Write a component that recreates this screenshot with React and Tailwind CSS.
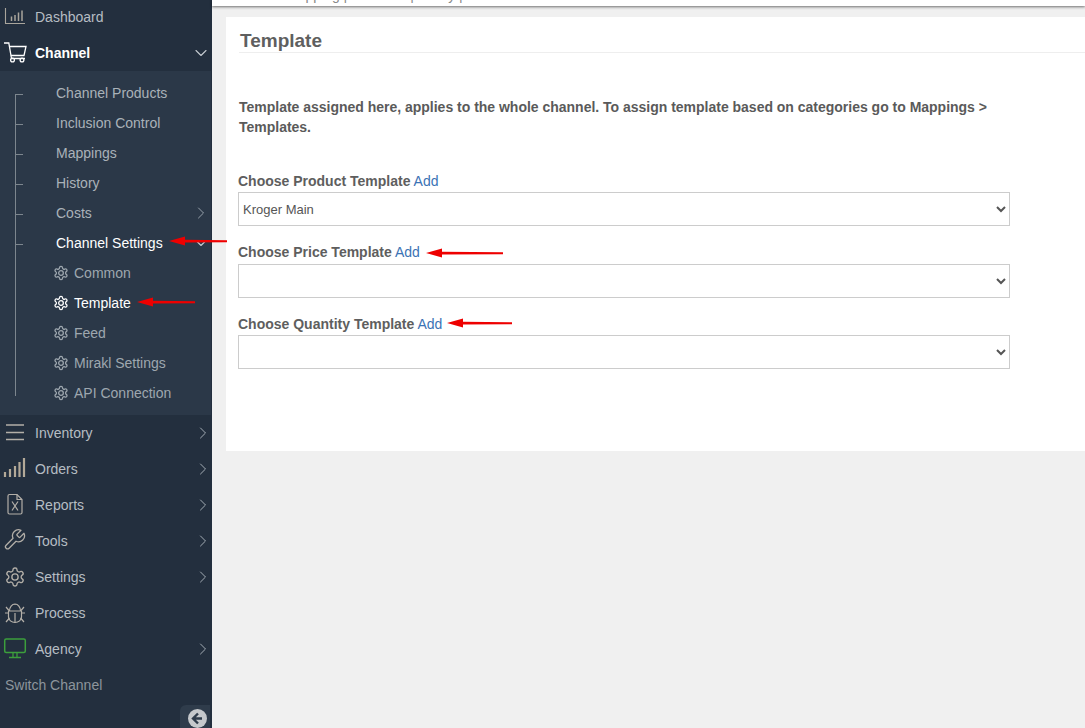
import React from "react";
import { ChevronRight, ChevronDown } from "lucide-react";

const GEAR = "M12.22 2h-.44a2 2 0 0 0-2 2v.18a2 2 0 0 1-1 1.73l-.43.25a2 2 0 0 1-2 0l-.15-.08a2 2 0 0 0-2.73.73l-.22.38a2 2 0 0 0 .73 2.73l.15.1a2 2 0 0 1 1 1.72v.51a2 2 0 0 1-1 1.74l-.15.09a2 2 0 0 0-.73 2.73l.22.38a2 2 0 0 0 2.73.73l.15-.08a2 2 0 0 1 2 0l.43.25a2 2 0 0 1 1 1.73V20a2 2 0 0 0 2 2h.44a2 2 0 0 0 2-2v-.18a2 2 0 0 1 1-1.73l.43-.25a2 2 0 0 1 2 0l.15.08a2 2 0 0 0 2.73-.73l.22-.39a2 2 0 0 0-.73-2.73l-.15-.08a2 2 0 0 1-1-1.74v-.5a2 2 0 0 1 1-1.74l.15-.09a2 2 0 0 0 .73-2.73l-.22-.38a2 2 0 0 0-2.73-.73l-.15.08a2 2 0 0 1-2 0l-.43-.25a2 2 0 0 1-1-1.73V4a2 2 0 0 0-2-2z";

const Gear = () => (
  <svg width="16" height="16" viewBox="0 0 24 24" fill="none" stroke="currentColor" strokeWidth="1.9" className="shrink-0">
    <path d={GEAR} />
    <circle cx="12" cy="12" r="3.5" />
  </svg>
);

const Ico = ({ children, stroke = "#b3afa8", sw = 1.3 }) => (
  <svg width="30" height="24" viewBox="0 0 30 24" fill="none" stroke={stroke} strokeWidth={sw}>
    {children}
  </svg>
);

const Dash = () => (
  <Ico stroke="#a9a59c" sw={1.1}>
    <path d="M5.500 3v15.500H25" />
    <path d="M11.500 16v-4.500M15 16v-6M18.500 16V7.500M22 16V5.500" strokeWidth="1.500" />
  </Ico>
);
const Cart = () => (
  <Ico stroke="#ffffff" sw={1.3}>
    <path d="M4 2h4.800L11.500 17.500H25" />
    <path d="M9 5.500H26L24 14.500H10.800" />
    <circle cx="12.500" cy="19" r="1.900" />
    <circle cx="22" cy="19" r="1.900" />
  </Ico>
);
const Lines = () => (
  <Ico sw={1.600}>
    <path d="M6 4h18M6 11.500h18M6 18.500h18" />
  </Ico>
);
const Bars = () => (
  <Ico stroke="#b3a998" sw={2.2}>
    <path d="M5 20v-5M10 20v-8M15 20v-11M19.500 20V5M24 20V1" />
  </Ico>
);
const Excel = () => (
  <Ico sw={1.200}>
    <path d="M9.500 1.500h7.500l5 5v13a1.500 1.500 0 0 1-1.500 1.500h-11a1.500 1.500 0 0 1-1.500-1.500V3a1.500 1.500 0 0 1 1.500-1.500z" />
    <path d="M17 1.500v5h5" />
    <path d="M12 8.500l6 9M18 8.500l-6 9" />
  </Ico>
);
const Wrench = () => (
  <Ico sw={1.300}>
    <path
      transform="translate(2.500 -1.200)"
      strokeLinejoin="round"
      d="M14.700 6.300a1 1 0 0 0 0 1.400l1.600 1.600a1 1 0 0 0 1.400 0l3.770-3.770a6 6 0 0 1-7.940 7.940l-6.910 6.910a2.120 2.120 0 0 1-3-3l6.910-6.910a6 6 0 0 1 7.940-7.940l-3.760 3.760z"
    />
  </Ico>
);
const SettingsIco = () => (
  <Ico sw={1.500}>
    <g transform="translate(4.200 1.200) scale(0.9)">
      <path d={GEAR} />
      <circle cx="12" cy="12" r="3.500" />
    </g>
  </Ico>
);
const BugIco = () => (
  <Ico sw={1.200}>
    <path d="M8.500 10h13v6a6.500 5.500 0 0 1-13 0v-6z" />
    <path d="M9.500 10a5.500 7 0 0 1 11 0" />
    <path d="M15 3v1M15 12v9.500" />
    <path d="M5 12h3.500M21.500 12H25M6 6l3 3.500M24 6l-3 3.500M6 21l3.500-4M24 21l-3.500-4" />
  </Ico>
);
const Screen = () => (
  <Ico stroke="#3c9f3c" sw={1.500}>
    <rect x="4.700" y="2" width="20.600" height="13.500" rx="1.500" />
    <path d="M13 16v4M17 16v4" strokeWidth="1.300" />
    <path d="M9 20.500h12" />
  </Ico>
);

const Arrow = ({ className, width }) => (
  <svg className={`absolute ${className}`} width={width} height="10" viewBox={`0 0 ${width} 10`}>
    <path d={`M0 5L16 0.500V3.800L${width} 4.200V6.200L16 6.500V9.500z`} fill="#ee0000" />
  </svg>
);

function MainRow({ icon, label, arrow, bold, down }) {
  return (
    <div className="h-9 flex items-center relative">
      <div className="w-[35px] shrink-0">{icon}</div>
      <span className={bold ? "font-bold text-white" : "text-[#b6bdc3]"}>{label}</span>
      {arrow && <ChevronRight size={20} strokeWidth={1.200} className="absolute right-[-1px] text-[#a3acb4]" />}
      {down && <ChevronDown size={20} strokeWidth={1.300} className="absolute right-px text-[#c4cad0]" />}
    </div>
  );
}

function SubRow({ label, active, arrow, down }) {
  return (
    <div className={`h-[30px] flex items-center relative ${active ? "text-white" : "text-[#aab2b9]"}`}>
      <span className="ml-[15px] w-2 h-px mt-[2px] bg-[#7d868e] shrink-0" />
      <span className="ml-[33px]">{label}</span>
      {arrow && <ChevronRight size={20} strokeWidth={1.200} className="absolute right-0 text-[#98a2ac]" />}
      {down && <ChevronDown size={20} strokeWidth={1.300} className="absolute right-0 text-[#c4cad0]" />}
    </div>
  );
}

function GearRow({ label, active }) {
  return (
    <div className={`h-[30px] flex items-center pl-[53px] gap-[5px] ${active ? "text-white" : "text-[#9ea7af]"}`}>
      <Gear />
      <span>{label}</span>
    </div>
  );
}

function Field({ label, value, className, labelClass }) {
  return (
    <div className={className}>
      <div className={`h-5 leading-5 text-[14px] whitespace-pre ${labelClass}`}>
        <span className="font-bold text-[#5e5e5e]">{label}</span>{" "}
        <span className="text-[#3b73b5]">Add</span>
      </div>
      <select className="block w-[772px] h-[34px] border border-[#cccccc] bg-white text-[#555] text-[13px] pl-0 pr-1 outline-none" defaultValue={value}>
        <option>{value}</option>
      </select>
    </div>
  );
}

export default function App() {
  return (
    <div className="h-[728px] w-[1085px] overflow-hidden flex bg-[#f0f0f0] text-[14px] font-['Liberation_Sans',Arial,sans-serif]">
      <aside className="w-[212px] shrink-0 bg-[#232f3e] relative">
        <div className="-mt-px">
          <MainRow icon={<Dash />} label="Dashboard" />
          <MainRow icon={<Cart />} label="Channel" bold down />
          <div className="bg-[#2b3848] w-[211px] py-[7px] relative">
            <div className="absolute left-[15px] top-6 w-px h-[301px] bg-[#7d868e]" />
            <SubRow label="Channel Products" />
            <SubRow label="Inclusion Control" />
            <SubRow label="Mappings" />
            <SubRow label="History" />
            <SubRow label="Costs" arrow />
            <SubRow label="Channel Settings" active down />
            <GearRow label="Common" />
            <GearRow label="Template" active />
            <GearRow label="Feed" />
            <GearRow label="Mirakl Settings" />
            <GearRow label="API Connection" />
          </div>
          <MainRow icon={<Lines />} label="Inventory" arrow />
          <MainRow icon={<Bars />} label="Orders" arrow />
          <MainRow icon={<Excel />} label="Reports" arrow />
          <MainRow icon={<Wrench />} label="Tools" arrow />
          <MainRow icon={<SettingsIco />} label="Settings" arrow />
          <MainRow icon={<BugIco />} label="Process" />
          <MainRow icon={<Screen />} label="Agency" arrow />
          <div className="h-9 flex items-center pl-[5px] text-[#8d959c]">Switch Channel</div>
        </div>
        <div className="absolute right-[2px] bottom-0 w-[30px] h-[23px] bg-[#2f3c4b] rounded-tl-md flex items-center justify-end pr-[3px]">
          <svg width="19" height="19" viewBox="0 0 19 19" className="-mb-[3px]">
            <circle cx="9.500" cy="9.500" r="9.500" fill="#c6c9cc" />
            <path d="M10 4.500L5 9.500l5 5M5 9.500h9" fill="none" stroke="#2f3c4b" strokeWidth="2.400" />
          </svg>
        </div>
      </aside>
      <main className="flex-1 relative min-w-0">
        <div className="h-[6px] bg-white shadow-[0_1px_3px_rgba(0,0,0,0.55)] overflow-hidden relative">
          <div className="absolute -top-[13px] left-[74px] text-[14px] leading-4 text-[#888] whitespace-pre">Mapping | Inclusion | Policy |</div>
        </div>
        <div className="ml-[14px] mt-[11px] h-[434px] bg-white">
          <div className="pl-3 pt-3">
            <h1 className="h-[23px] ml-px pl-px text-[19px] leading-6 font-bold text-[#5f5f5f] border-b border-[#eeeeee] box-content">Template</h1>
            <p className="mt-[44px] pl-px w-[771px] text-[14px] leading-5 font-bold text-[#5a5a5a] tracking-[-0.01px]">
              Template assigned here, applies to the whole channel. To assign template based on categories go to Mappings &gt; Templates.
            </p>
            <Field className="mt-[34px]" labelClass="mb-px" label="Choose Product Template" value="Kroger Main" />
            <Field className="mt-4" labelClass="mb-[2px]" label="Choose Price Template" value="" />
            <Field className="mt-4" labelClass="mb-px" label="Choose Quantity Template" value="" />
          </div>
        </div>
        <Arrow className="left-[-43px] top-[236px]" width={58} />
        <Arrow className="left-[214px] top-[248px]" width={77} />
        <Arrow className="left-[235px] top-[318px]" width={65} />
        <Arrow className="left-[-75px] top-[297px]" width={58} />
      </main>
    </div>
  );
}
